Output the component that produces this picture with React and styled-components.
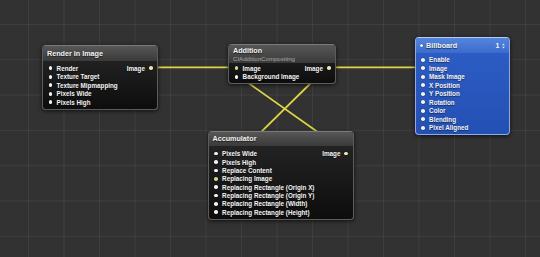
import React from 'react';
import styled, { createGlobalStyle } from 'styled-components';

const GlobalStyle = createGlobalStyle`
  html, body {
    margin: 0;
    padding: 0;
    background: #333333;
  }
  body {
    font-family: "Liberation Sans", Arial, sans-serif;
  }
`;

const Canvas = styled.div`
  position: relative;
  width: 540px;
  height: 257px;
  overflow: hidden;
  background-color: #323232;
  background-image:
    linear-gradient(to right, rgba(255, 255, 255, 0.06) 1px, transparent 1px),
    linear-gradient(to bottom, rgba(255, 255, 255, 0.06) 1px, transparent 1px);
  background-size: 35.5px 35.3px;
  background-position: 28px 24px;
`;

const Wires = styled.svg`
  position: absolute;
  left: 0;
  top: 0;
  width: 540px;
  height: 257px;
  z-index: 1;
`;

const Node = styled.div`
  position: absolute;
  z-index: 2;
  left: ${p => p.$x}px;
  top: ${p => p.$y}px;
  width: ${p => p.$w}px;
  box-sizing: border-box;
  border-radius: 4px;
  border: 1px solid ${p => (p.$blue ? '#8fabe6' : '#5c5c5c')};
  border-top-color: ${p => (p.$blue ? '#b9cdf4' : '#7a7a7a')};
  background: ${p =>
    p.$blue
      ? 'linear-gradient(#2e5ec6, #2350b4)'
      : 'linear-gradient(#272727, #0d0d0d)'};
  box-shadow: 0 1px 4px rgba(0, 0, 0, 0.7);
  overflow: hidden;
  color: #f4f4f4;
`;

const Header = styled.div`
  display: flex;
  flex-direction: column;
  justify-content: center;
  height: ${p => p.$h}px;
  box-sizing: border-box;
  padding: 0 4px;
  background: ${p =>
    p.$blue
      ? 'linear-gradient(#5586dc, #3b6bcd)'
      : 'linear-gradient(#575757, #3a3a3a)'};
`;

const HeaderRow = styled.div`
  display: flex;
  align-items: center;
  gap: 3px;
`;

const Title = styled.div`
  font-size: 7.2px;
  font-weight: bold;
  line-height: 8px;
  white-space: nowrap;
  text-shadow: 0 1px 1px rgba(0, 0, 0, 0.6);
`;

const Subtitle = styled.div`
  font-size: 6.1px;
  line-height: 7px;
  color: #a9a9a9;
  white-space: nowrap;
`;

const Count = styled.div`
  margin-left: auto;
  display: flex;
  align-items: center;
  gap: 2px;
  font-size: 7px;
  font-weight: bold;
`;

const Body = styled.div`
  display: flex;
  justify-content: space-between;
  padding: ${p => p.$pt}px 4.5px ${p => p.$pb}px 5.5px;
`;

const Column = styled.div`
  display: flex;
  flex-direction: column;
  align-items: ${p => (p.$end ? 'flex-end' : 'flex-start')};
`;

const Port = styled.div`
  display: flex;
  align-items: center;
  gap: ${p => p.$gap || 4.5}px;
  height: ${p => p.$h}px;
  font-size: 6.3px;
  font-weight: bold;
  white-space: nowrap;
  text-shadow: 0 1px 1px rgba(0, 0, 0, 0.5);
`;

const Dot = styled.span`
  display: inline-block;
  width: 3.6px;
  height: 3.6px;
  border-radius: 50%;
  background: ${p => p.$c || '#f2f2f2'};
  box-shadow: 0 0 1px rgba(0, 0, 0, 0.8);
  flex: none;
`;

const Stepper = () => (
  <svg width="3" height="6" viewBox="0 0 3 6">
    <path d="M1.5 0.4 L2.8 2.3 L0.2 2.3 Z M1.5 5.6 L2.8 3.7 L0.2 3.7 Z" fill="#e6ecfa" />
  </svg>
);

const LINK = '#ddd546';
const LIT = '#e9e6b4';

const Inputs = ({ items, h, lit }) => (
  <Column>
    {items.map(name => (
      <Port key={name} $h={h}>
        <Dot $c={lit === name ? '#cfd98c' : undefined} />
        {name}
      </Port>
    ))}
  </Column>
);

const Output = ({ h }) => (
  <Column $end>
    <Port $h={h} $gap={4}>
      Image
      <Dot $c={LIT} />
    </Port>
  </Column>
);

export default function App() {
  return (
    <>
      <GlobalStyle />
      <Canvas>
        <Wires viewBox="0 0 540 257">
          <g stroke={LINK} strokeWidth="1.8" fill="none" strokeLinecap="round">
            <line x1="150" y1="67.3" x2="236" y2="67.3" />
            <line x1="330" y1="67.3" x2="421" y2="67.3" />
            <line x1="237" y1="75" x2="329" y2="140" />
            <line x1="319" y1="75" x2="253" y2="140" />
          </g>
        </Wires>

        <Node $x={42} $y={45} $w={116}>
          <Header $h={15}>
            <Title>Render in Image</Title>
          </Header>
          <Body $pt={3} $pb={2}>
            <Inputs
              h={8.5}
              items={['Render', 'Texture Target', 'Texture Mipmapping', 'Pixels Wide', 'Pixels High']}
            />
            <Output h={8.5} />
          </Body>
        </Node>

        <Node $x={228} $y={44} $w={108}>
          <Header $h={18}>
            <Title>Addition</Title>
            <Subtitle>CIAdditionCompositing</Subtitle>
          </Header>
          <Body $pt={1} $pb={1.5}>
            <Inputs h={8.5} items={['Image', 'Background Image']} lit="Image" />
            <Output h={8.5} />
          </Body>
        </Node>

        <Node $x={414.5} $y={37} $w={95} $blue>
          <Header $h={15} $blue>
            <HeaderRow>
              <Dot />
              <Title>Billboard</Title>
              <Count>
                1
                <Stepper />
              </Count>
            </HeaderRow>
          </Header>
          <Body $pt={2.5} $pb={2}>
            <Inputs
              h={8.5}
              items={[
                'Enable',
                'Image',
                'Mask Image',
                'X Position',
                'Y Position',
                'Rotation',
                'Color',
                'Blending',
                'Pixel Aligned',
              ]}
            />
          </Body>
        </Node>

        <Node $x={207.5} $y={131} $w={146}>
          <Header $h={14}>
            <Title>Accumulator</Title>
          </Header>
          <Body $pt={3.5} $pb={2.5}>
            <Inputs
              h={8.35}
              lit="Replacing Image"
              items={[
                'Pixels Wide',
                'Pixels High',
                'Replace Content',
                'Replacing Image',
                'Replacing Rectangle (Origin X)',
                'Replacing Rectangle (Origin Y)',
                'Replacing Rectangle (Width)',
                'Replacing Rectangle (Height)',
              ]}
            />
            <Output h={8.35} />
          </Body>
        </Node>
      </Canvas>
    </>
  );
}
